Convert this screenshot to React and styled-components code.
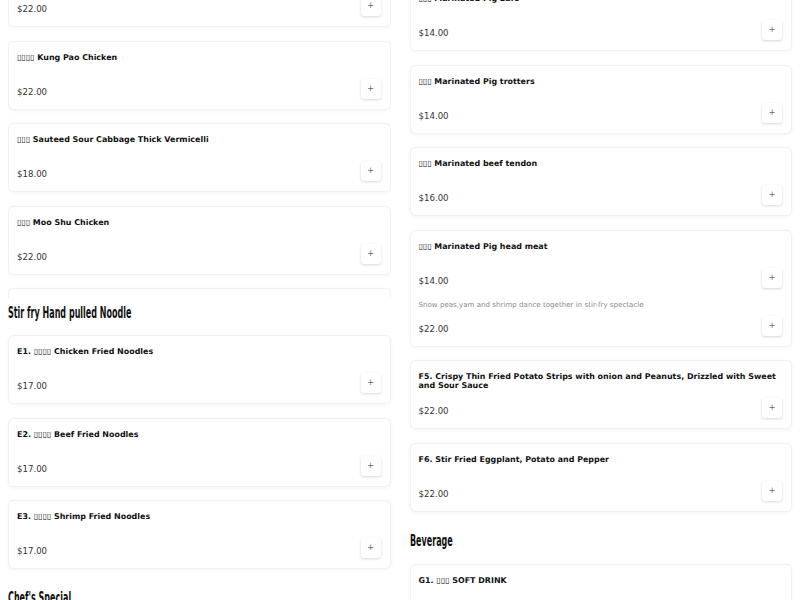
import React from "react";
import styled, { createGlobalStyle } from "styled-components";

const GlobalStyle = createGlobalStyle`
  html, body {
    margin: 0;
    padding: 0;
    background: #ffffff;
    overflow: hidden;
  }
  body {
    font-family: "DejaVu Sans", "Noto Sans", sans-serif;
    color: #1d1d1d;
  }
`;

const Page = styled.div`
  height: 600px;
  overflow: hidden;
  padding: 0 8px;
  display: grid;
  grid-template-columns: 1fr 1fr;
  column-gap: 19px;
  align-items: start;
`;

const Column = styled.div`
  display: flex;
  flex-direction: column;
  margin-top: ${props => props.offset}px;
`;

const List = styled.div`
  display: flex;
  flex-direction: column;
  gap: 13.5px;
  ${props => props.clip && `
    height: ${props.clip}px;
    overflow: hidden;
  `}
`;

const Heading = styled.h2`
  margin: ${props => props.first ? "3px" : "17px"} 0 ${props => props.first ? "10px" : "11px"};
  height: 24px;
  font-family: "Liberation Sans Narrow", "DejaVu Sans Condensed", sans-serif;
  font-weight: 700;
  font-size: 16.5px;
  line-height: 24px;
  color: #111;
  white-space: nowrap;
  transform: scaleX(0.54);
  transform-origin: left center;
`;

const Card = styled.div`
  box-sizing: border-box;
  min-height: 69px;
  padding: 11px 9px 10px 8px;
  background: #fff;
  border: 1px solid #f1f1f1;
  border-radius: 6px;
  box-shadow: 0 1px 4px rgba(0, 0, 0, 0.05);
  display: flex;
  flex-direction: column;
`;

const Title = styled.div`
  font-size: 7.95px;
  font-weight: 700;
  line-height: 9px;
  color: #111;
  min-height: 26px;
  margin-right: -4px;
`;

const Description = styled.div`
  margin: 12px 0 6px;
  font-size: 7.1px;
  line-height: 10px;
  color: #8a8a8a;
`;

const PriceRow = styled.div`
  margin-top: auto;
  display: flex;
  justify-content: space-between;
  align-items: flex-end;
`;

const Price = styled.span`
  font-size: 8.6px;
  line-height: 14px;
  color: #333;
`;

const AddButton = styled.button`
  width: 20px;
  height: 20px;
  padding: 0;
  border: none;
  border-radius: 3px;
  background: #fff;
  box-shadow: 0 1px 3px rgba(0, 0, 0, 0.16);
  color: #666;
  font-family: "DejaVu Sans", sans-serif;
  font-size: 8px;
  line-height: 20px;
  cursor: pointer;
`;

const left = {
  before: [
    { title: "▯▯▯▯ Sweet and Sour Chicken", price: "$22.00" },
    { title: "▯▯▯▯ Kung Pao Chicken", price: "$22.00" },
    { title: "▯▯▯ Sauteed Sour Cabbage Thick Vermicelli", price: "$18.00" },
    { title: "▯▯▯ Moo Shu Chicken", price: "$22.00" },
    { title: "▯▯▯ Fish Fragrant Shredded Pork", price: "$20.00" },
  ],
  noodle: [
    { title: "E1. ▯▯▯▯ Chicken Fried Noodles", price: "$17.00" },
    { title: "E2. ▯▯▯▯ Beef Fried Noodles", price: "$17.00" },
    { title: "E3. ▯▯▯▯ Shrimp Fried Noodles", price: "$17.00" },
  ],
};

const right = {
  marinated: [
    { title: "▯▯▯ Marinated Pig Ears", price: "$14.00" },
    { title: "▯▯▯ Marinated Pig trotters", price: "$14.00" },
    { title: "▯▯▯ Marinated beef tendon", price: "$16.00" },
    {
      title: "▯▯▯ Marinated Pig head meat",
      price: "$14.00",
      extra: {
        description: "Snow peas,yam and shrimp dance together in stir-fry spectacle",
        price: "$22.00",
      },
    },
    { title: "F5. Crispy Thin Fried Potato Strips with onion and Peanuts, Drizzled with Sweet and Sour Sauce", price: "$22.00" },
    { title: "F6. Stir Fried Eggplant, Potato and Pepper", price: "$22.00" },
  ],
  beverage: [
    { title: "G1. ▯▯▯ SOFT DRINK", price: "$3.00" },
  ],
};

function Item({ item }) {
  return (
    <Card>
      <Title>{item.title}</Title>
      <PriceRow>
        <Price>{item.price}</Price>
        <AddButton>+</AddButton>
      </PriceRow>
      {item.extra && (
        <>
          <Description>{item.extra.description}</Description>
          <PriceRow>
            <Price>{item.extra.price}</Price>
            <AddButton>+</AddButton>
          </PriceRow>
        </>
      )}
    </Card>
  );
}

export default function App() {
  return (
    <>
      <GlobalStyle />
      <Page>
        <Column offset={-42}>
          <List clip={340}>
            {left.before.map((item, i) => <Item key={i} item={item} />)}
          </List>
          <Heading first>Stir fry Hand pulled Noodle</Heading>
          <List>
            {left.noodle.map((item, i) => <Item key={i} item={item} />)}
          </List>
          <Heading>Chef's Special</Heading>
        </Column>
        <Column offset={-18}>
          <List>
            {right.marinated.map((item, i) => <Item key={i} item={item} />)}
          </List>
          <Heading>Beverage</Heading>
          <List>
            {right.beverage.map((item, i) => <Item key={i} item={item} />)}
          </List>
        </Column>
      </Page>
    </>
  );
}
